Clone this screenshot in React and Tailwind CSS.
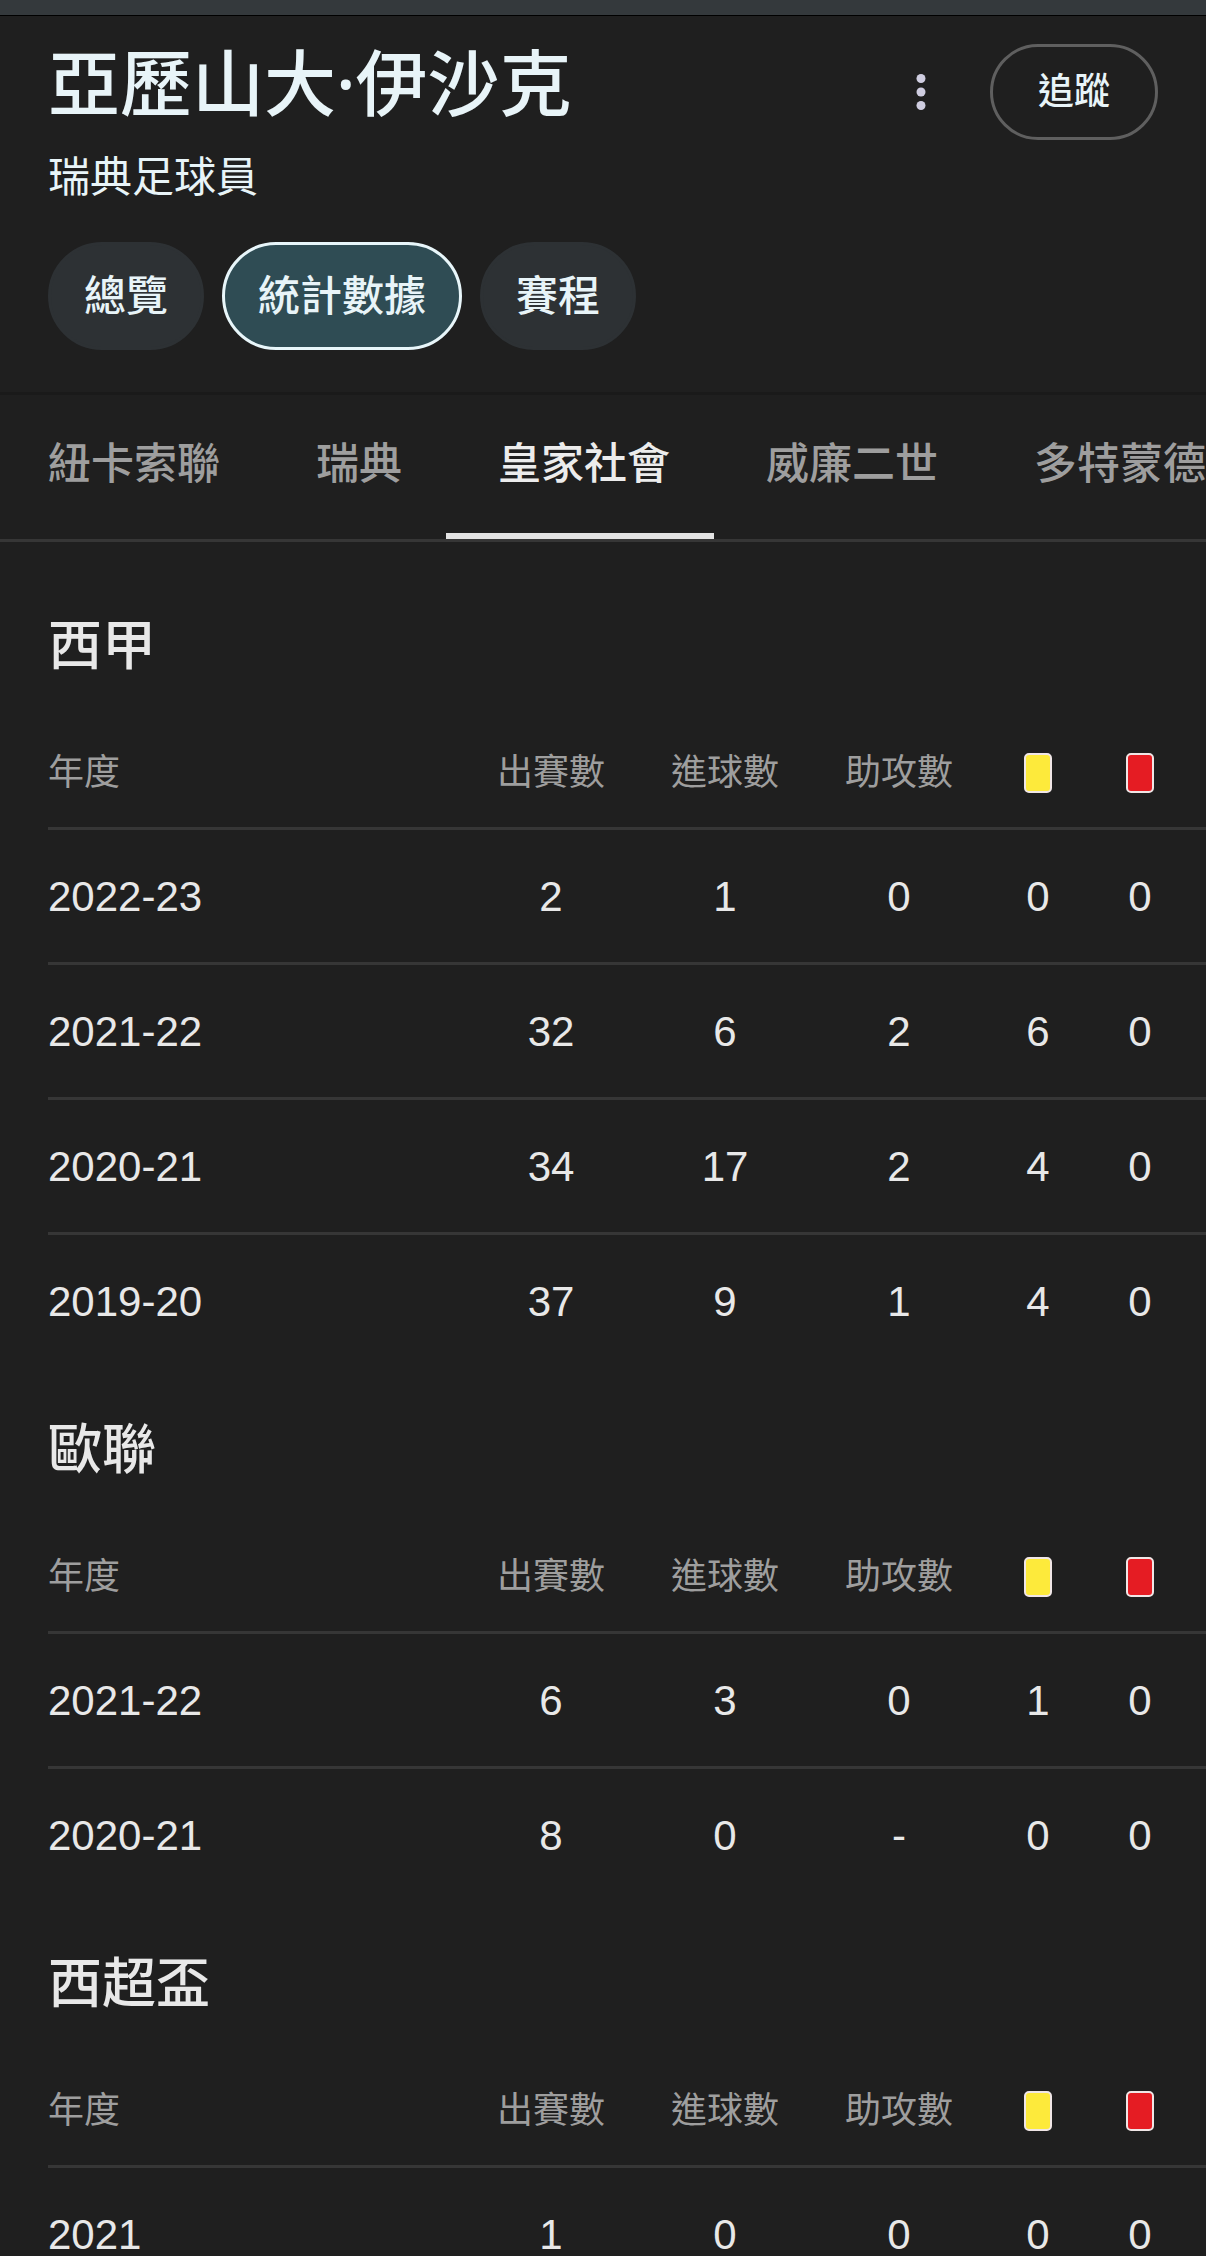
import { useState } from 'react';

const pages = ['總覽', '統計數據', '賽程'];

const teams = ['紐卡索聯', '瑞典', '皇家社會', '威廉二世', '多特蒙德'];

// 各項賽事數據: 年度, 出賽, 進球, 助攻, 黃牌, 紅牌
const competitions = [
  {
    name: '西甲',
    rows: [
      ['2022-23', '2', '1', '0', '0', '0'],
      ['2021-22', '32', '6', '2', '6', '0'],
      ['2020-21', '34', '17', '2', '4', '0'],
      ['2019-20', '37', '9', '1', '4', '0'],
    ],
  },
  {
    name: '歐聯',
    rows: [
      ['2021-22', '6', '3', '0', '1', '0'],
      ['2020-21', '8', '0', '-', '0', '0'],
    ],
  },
  {
    name: '西超盃',
    rows: [['2021', '1', '0', '0', '0', '0']],
  },
];

function Header() {
  const [page, setPage] = useState('統計數據');

  return (
    <header className="border-b-[3px] border-[#1a1a1a] px-12 pt-7 pb-[42px] text-[#e8f4f8]">
      <div className="flex items-start justify-between">
        <div>
          <h1 className="font-['Noto_Sans','Noto_Sans_CJK_TC',sans-serif] text-[72px] leading-[76px] font-medium">
            亞歷山大·伊沙克
          </h1>
          <p className="mt-7 text-[42px] leading-[60px]">瑞典足球員</p>
        </div>
        <div className="flex items-center gap-12">
          <button type="button" aria-label="更多選項" className="flex h-24 w-[42px] items-center justify-center">
            <svg viewBox="0 0 10 36" className="h-9 w-[10px]" fill="#cfcde0">
              <circle cx="5" cy="4.5" r="4.5" />
              <circle cx="5" cy="18" r="4.5" />
              <circle cx="5" cy="31.5" r="4.5" />
            </svg>
          </button>
          <button type="button" className="h-24 rounded-full border-[3px] border-[#5f5f5f] px-[45px] text-4xl font-medium">
            追蹤
          </button>
        </div>
      </div>

      <div className="mt-[34px] flex gap-[18px]">
        {pages.map((name) => (
          <button
            key={name}
            type="button"
            onClick={() => setPage(name)}
            className={`h-[108px] rounded-full border-[3px] px-[33px] text-[42px] font-medium ${
              name === page ? 'border-[#e8f6fa] bg-[#2f4c54]' : 'border-[#2d3134] bg-[#2d3134]'
            }`}
          >
            {name}
          </button>
        ))}
      </div>
    </header>
  );
}

function TeamTabs() {
  const [team, setTeam] = useState('皇家社會');

  return (
    <nav className="overflow-hidden border-b-[3px] border-[#363636]">
      <div role="tablist" className="-ml-1 flex">
        {teams.map((name) => (
          <button
            key={name}
            type="button"
            role="tab"
            aria-selected={name === team}
            onClick={() => setTeam(name)}
            className={`h-36 shrink-0 border-b-[6px] pr-11 pl-[52px] text-[43px] font-medium ${
              name === team ? 'border-[#e3e3e3] text-[#ececec]' : 'border-transparent text-[#9e9e9e]'
            }`}
          >
            {name}
          </button>
        ))}
      </div>
    </nav>
  );
}

function Card({ label, color }) {
  return (
    <span
      role="img"
      aria-label={label}
      className={`mx-auto block h-10 w-7 rounded-[5px] border-2 border-[#f0e6e6] ${color}`}
    />
  );
}

function Competition({ name, rows }) {
  return (
    <section className="pl-12">
      <h2 className="pt-12 pb-10 text-[54px] leading-[64px] font-medium">{name}</h2>
      <table className="w-full table-fixed border-separate border-spacing-0 text-center">
        <thead className="text-4xl text-[#9e9e9e] [&_th]:h-28 [&_th]:border-b-[3px] [&_th]:border-[#363636] [&_th]:py-0">
          <tr>
            <th className="text-left font-normal">年度</th>
            <th className="w-[174px] font-normal">出賽數</th>
            <th className="w-[174px] font-normal">進球數</th>
            <th className="w-[174px] font-normal">助攻數</th>
            <th className="w-[104px]">
              <Card label="黃牌" color="bg-[#fdea3b]" />
            </th>
            <th className="w-[116px] pr-4">
              <Card label="紅牌" color="bg-[#e51c23]" />
            </th>
          </tr>
        </thead>
        <tbody className="text-[42px]">
          {rows.map(([year, ...stats]) => (
            <tr
              key={year}
              className="*:h-[135px] *:border-b-[3px] *:border-[#363636] *:py-0 last:*:border-transparent"
            >
              <th scope="row" className="text-left font-normal">
                {year}
              </th>
              {stats.map((value, index) => (
                <td key={index} className="last:pr-4">
                  {value}
                </td>
              ))}
            </tr>
          ))}
        </tbody>
      </table>
    </section>
  );
}

export default function App() {
  return (
    <div
      lang="zh-TW"
      className="h-screen overflow-hidden bg-[#1f1f1f] font-['Liberation_Sans','Noto_Sans_CJK_TC',sans-serif] text-[#e8e8e8]"
    >
      <div className="h-4 border-b border-black bg-[#34393c]" />
      <Header />
      <TeamTabs />
      <main className="pt-6">
        {competitions.map((item) => (
          <Competition key={item.name} {...item} />
        ))}
      </main>
    </div>
  );
}
